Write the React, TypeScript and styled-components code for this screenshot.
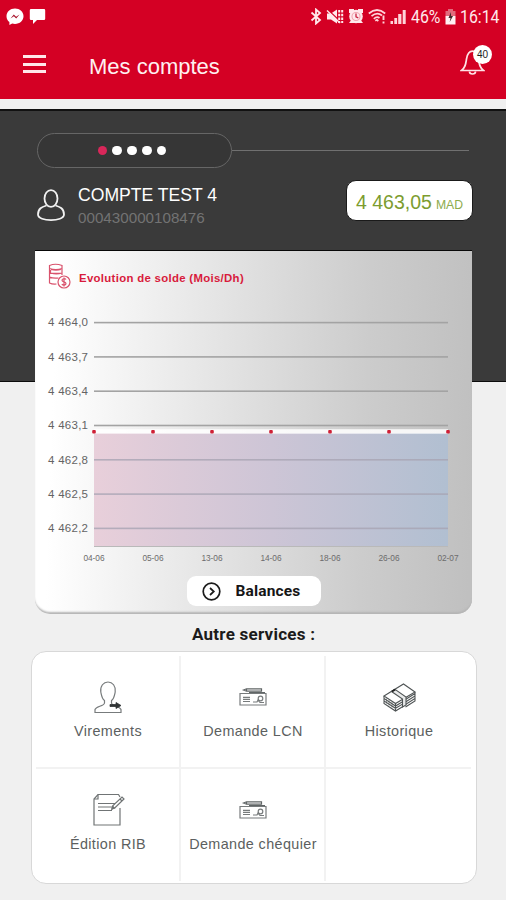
import React from 'react';
import styled, { createGlobalStyle } from 'styled-components';

const sans = '"Liberation Sans", Arial, sans-serif';
const roboto = 'Roboto, "Liberation Sans", sans-serif';

const GlobalStyle = createGlobalStyle`
  * { box-sizing: border-box; }
  body { margin: 0; background: #f0f0f0; font-family: ${sans}; }
  svg { display: block; flex: none; }
`;

const Page = styled.div`
  width: 506px;
  height: 900px;
  overflow: hidden;
  display: flex;
  flex-direction: column;
  background: #f0f0f0;
`;

const Header = styled.header`
  height: 99px;
  flex: none;
  background: #d40024;
  color: #fff;
  display: flex;
  flex-direction: column;
`;

const StatusBar = styled.div`
  height: 33px;
  padding: 0 6px 0 6px;
  display: flex;
  align-items: center;
  justify-content: space-between;
`;

const StatusGroup = styled.div<{ $gap: number }>`
  display: flex;
  align-items: center;
  gap: ${(p) => p.$gap}px;
`;

const StatusText = styled.span<{ $w: number }>`
  width: ${(p) => p.$w}px;
  font: 400 18px/20px ${roboto};
  color: #ffe9ec;
  white-space: nowrap;
  transform: scaleX(0.88);
  transform-origin: left center;
`;

const AppBar = styled.div`
  height: 66px;
  padding: 0 13px 0 23px;
  display: flex;
  align-items: flex-start;
`;

const MenuButton = styled.button`
  width: 23px;
  height: 18px;
  margin: 22px 43px 0 0;
  padding: 0;
  border: 0;
  background: none;
  display: flex;
  flex-direction: column;
  justify-content: space-between;
`;

const MenuLine = styled.span`
  height: 3px;
  width: 23px;
  background: #ffe6e9;
`;

const Title = styled.h1`
  margin: 21px 0 0;
  flex: 1;
  font: 400 22px/26px ${sans};
  color: #fff0f1;
`;

const BellButton = styled.div`
  position: relative;
  width: 33px;
  height: 34px;
  margin-top: 10px;
`;

const Badge = styled.span`
  position: absolute;
  right: 1px;
  top: 2px;
  width: 19px;
  height: 19px;
  border-radius: 50%;
  background: #fff;
  color: #222;
  font: 400 10px/19px ${sans};
  text-align: center;
`;

const Main = styled.main`
  flex: 1;
  margin-top: 10px;
  border-top: 2px solid #111;
  background: linear-gradient(#3a3a3a 0 270px, #0c0c0c 270px 271px, #f0f0f0 271px);
  display: flex;
  flex-direction: column;
`;

const PagerRow = styled.div`
  margin: 22px 37px 1px 37px;
  display: flex;
  align-items: center;
`;

const Pager = styled.div`
  width: 195px;
  height: 35px;
  border: 1px solid #666;
  border-radius: 18px;
  background: #363636;
  display: flex;
  align-items: center;
  justify-content: center;
  gap: 5px;
  padding-right: 5px;
`;

const Dot = styled.span<{ $active?: boolean }>`
  width: 9.8px;
  height: 9.8px;
  border-radius: 50%;
  background: ${(p) => (p.$active ? '#d9275a' : '#fff')};
`;

const PagerLine = styled.div`
  flex: 1;
  height: 1px;
  background: #707070;
`;

const Account = styled.section`
  height: 82px;
  padding: 10px 33px 0 37px;
  display: flex;
  align-items: flex-start;
`;

const Avatar = styled.div`
  margin-top: 10px;
`;

const AccountText = styled.div`
  flex: 1;
  padding: 6px 0 0 13px;
`;

const AccountName = styled.div`
  font: 400 17.6px/20px ${sans};
  color: #fff;
`;

const AccountNumber = styled.div`
  margin-top: 4px;
  font: 400 15.2px/17px ${sans};
  color: #737373;
`;

const Balance = styled.div`
  width: 127px;
  height: 41px;
  margin-top: 1px;
  border: 1px solid #1a1a1a;
  border-radius: 10px;
  background: #fff;
  color: #7c9c2f;
  display: flex;
  align-items: baseline;
  justify-content: center;
  gap: 4px;
  font: 400 19.5px/43px ${sans};
`;

const Currency = styled.span`
  font-size: 12.2px;
  color: #8dab4c;
`;

const Card = styled.section`
  width: 437px;
  height: 363px;
  margin-left: 35px;
  flex: none;
  border-radius: 0 0 15px 15px;
  background: linear-gradient(92deg, #fff 5%, #f1f1f1 24%, #dedede 50%, #cccccc 75%, #c0c0c0 99%);
  box-shadow: 0 -1px 0 #080808, inset 0 -3px 2px -1px #b5b5b5;
  display: flex;
  flex-direction: column;
`;

const CardHead = styled.div`
  height: 54px;
  padding: 12px 0 0 13px;
  display: flex;
  align-items: flex-start;
  gap: 8px;
`;

const CardTitle = styled.h2`
  margin: 8px 0 0;
  font: 700 11.4px/14px ${sans};
  letter-spacing: 0.31px;
  color: #d81b3c;
`;

const BalancesButton = styled.button`
  width: 134px;
  height: 30px;
  margin: 6px 0 0 151.500px;
  padding: 0 0 0 15px;
  border: 0;
  border-radius: 9px;
  background: #fff;
  display: flex;
  align-items: center;
  gap: 15px;
  font: 700 15.5px/30px ${roboto};
  letter-spacing: 0.15px;
  color: #161616;
`;

const SectionTitle = styled.h2`
  margin: 10px 0 0;
  padding-left: 192px;
  font: 700 17px/20px ${roboto};
  letter-spacing: 0.25px;
  color: #1b1b1b;
`;

const ServiceGrid = styled.section`
  width: 446px;
  height: 233px;
  margin: 7px 0 0 31px;
  padding: 4px 3px 3px 4px;
  border: 1.5px solid #d8d8d8;
  border-radius: 15px;
  background: #fff;
  display: grid;
  grid-template-columns: 145px 145px 145px;
  grid-template-rows: 113px 112px;
`;

const Service = styled.div<{ $right?: boolean; $bottom?: boolean }>`
  border-right: ${(p) => (p.$right ? '2px solid #f2f2f2' : '0')};
  border-bottom: ${(p) => (p.$bottom ? '2px solid #f2f2f2' : '0')};
  display: flex;
  flex-direction: column;
  align-items: center;
  padding: 22px 0 0 1px;
`;

const ServiceIcon = styled.div`
  height: 38px;
  display: flex;
  align-items: center;
`;

const ServiceLabel = styled.span`
  margin-top: 7px;
  font: 400 14.4px/17px ${sans};
  letter-spacing: 0.38px;
  color: #5c5f60;
  white-space: nowrap;
`;

const Messenger = () => (
  <svg width="18" height="18" viewBox="0 0 18 18">
    <path d="M9 .6C4.2.6.5 4 .5 8.300c0 2.400 1.100 4.400 2.900 5.800v3l2.800-1.500c.9.300 1.800.4 2.800.4 4.800 0 8.500-3.300 8.500-7.700S13.800.6 9 .6z" fill="#fff" />
    <path d="M4.500 10.500l3.300-4 2.300 2.300 3.400-2.300-3.300 4-2.300-2.300z" fill="#a8142c" />
  </svg>
);

const Chat = () => (
  <svg width="17" height="17" viewBox="0 0 17 17">
    <path d="M2 1h13q1.200 0 1.200 1.200v8.600q0 1.200-1.200 1.200H8l-4 4v-4H2Q.8 12 .8 10.800V2.200Q.8 1 2 1z" fill="#fff" />
  </svg>
);

const Bluetooth = () => (
  <svg width="12" height="17" viewBox="0 0 12 17" fill="none" stroke="#ffe9ec" strokeWidth="1.8">
    <path d="M1.500 4.500l8.500 7.500-4 3.500V1.500l4 3.500-8.500 7.500" />
  </svg>
);

const Muted = () => (
  <svg width="18" height="17" viewBox="0 0 18 17">
    <path d="M1 5.500h4l6-4v14l-6-4H1z" fill="#ffe9ec" />
    <path d="M1.500 1.500l14 13" stroke="#d40024" strokeWidth="1.400" />
    <path d="M1 2.500l13 12.500" stroke="#ffe9ec" strokeWidth="1.400" />
    <path d="M13.200 2v13M16.200 2v13" stroke="#ffe9ec" strokeWidth="2" strokeDasharray="2.500 1.200" />
  </svg>
);

const Alarm = () => (
  <svg width="16" height="17" viewBox="0 0 16 17">
    <path d="M1 1h5v4H1zM10 1h5v4h-5zM1 15l3-4h8l3 4z" fill="#ffe9ec" />
    <circle cx="8" cy="8.500" r="6.800" fill="#ffe9ec" />
    <circle cx="8" cy="8.500" r="4" fill="none" stroke="#f0a5b0" strokeWidth="1.100" />
    <path d="M8 5.500v3.300l2.300 1" fill="none" stroke="#c82440" strokeWidth="1.300" />
  </svg>
);

const Wifi = () => (
  <svg width="18" height="17" viewBox="0 0 18 17" fill="none" stroke="#ffd4da" strokeWidth="1.700">
    <path d="M.8 5.500Q9-1.500 17.200 5.500M3.500 8.200Q9 3.500 14 7.500M5.800 10.800Q9 8 11.500 10M7.300 12.800l1.700-1 1.300 1.300" />
    <path d="M15.500 7.500v4.500M15.500 13.500v2" strokeWidth="1.900" />
  </svg>
);

const Signal = () => (
  <svg width="17" height="16" viewBox="0 0 17 16" fill="#ffd4da">
    <path d="M.5 12h2.500v3H.5zM4.300 9h2.800v6H4.300zM8.200 5h3.200v10H8.200zM12.700 1h3v14h-3z" />
  </svg>
);

const Battery = () => (
  <svg width="11" height="16" viewBox="0 0 11 16">
    <path d="M3 0h5v2h2.500v5h-10V2H3z" fill="#e2697c" />
    <path d="M.5 7h10v8.500H.5z" fill="#fff0f2" />
    <path d="M6 3L3.500 9h2L4.700 13l3.300-6H6z" fill="#43262b" />
  </svg>
);

const Bell = () => (
  <svg width="25" height="32" viewBox="0 0 25 32" fill="none" stroke="#ffe3e7" strokeWidth="1.700">
    <path d="M1.500 27.500c4-3 4.200-6.500 5-11.500 .8-5 2.600-7.800 6-7.800s5.200 2.800 6 7.800c.8 5 1 8.500 5 11.500z" />
    <path d="M9.500 28.500c0 3.300 6 3.300 6 0" />
  </svg>
);

const Person = () => (
  <svg width="28" height="33" viewBox="0 0 28 33" fill="none" stroke="#f2f2f2" strokeWidth="1.800">
    <ellipse cx="14" cy="9.500" rx="6.500" ry="8.400" />
    <path d="M9.500 16.500C5 18 1 19.500 1 25.500c0 7.500 26 7.500 26 0 0-6-4-7.500-8.500-9" />
  </svg>
);

const Coins = () => (
  <svg width="23" height="27" viewBox="0 0 23 27" fill="none" stroke="#d9536d" strokeWidth="1.200">
    <path d="M1.500 2.500q6-2.500 12.500 0v3q-6 2-12.500 0zM2.500 7v3q6 2 11.500 0V7M1.500 11v3q4 1.700 9 1M1.500 16v4q3 1.500 7 1M3 6.500q5 1.300 10 0M2 15h7M2 10.300h11M1.500 5v14M14 5v7" />
    <circle cx="16" cy="19" r="6" />
    <path d="M18 16.500c-1-1.300-4-.9-4 .8s4 1.500 4 3.300-3 2-4.200.5M16 14.500v9" />
  </svg>
);

const ClientIcon = () => (
  <svg width="28" height="33" viewBox="0 0 28 33" fill="none" stroke="#777b7c" strokeWidth="1.200">
    <path d="M1 31.500v-3c1-3.500 9-3 9.500-6.500v-2.500C8 18 7.500 14.500 6.800 11 6 5 9.500 1 14 1s8 4 7.200 10c-.7 3.500-1.200 7-3.700 8.500V22c.5 3.500 8.500 3 9.500 6.500v3z" />
    <path d="M16 23.500h6v-2l5 3-5 3v-2h-6z" fill="#303435" stroke="#303435" strokeWidth=".8" />
  </svg>
);

const ChequeIcon = () => (
  <svg width="28" height="18" viewBox="0 0 28 18" fill="none" stroke="#777b7c" strokeWidth="1.200">
    <path d="M1 5.500h26v11.500H1zM4 9.300h7M4 11.300h7M4 13.500h7M14 14h4l1-2 2 2.500h4" />
    <circle cx="21.500" cy="10.500" r="2.300" />
    <path d="M4.500 2l3-1.200h15v2.400h-15zM7.500.8v2.400M10 4.500h16" stroke="#606566" />
  </svg>
);

const CashIcon = () => (
  <svg width="33" height="29" viewBox="0 0 33 29" fill="none" stroke="#505556" strokeWidth="1.100">
    <path d="M1 13L20.500 1 32 9 12.500 20.500z" fill="#fff" />
    <path d="M1 13v2.500l11.500 7.500 7-4.200M1 16v2l11.500 7.300 7-4.200M1 18.500v2l11.500 7.500 7-4.200M12.500 20.500V28M22.500 19l9.500-6V9M22.500 21.500l9.500-6v-3M22.500 16.500l9.500-6M22.500 24l9.500-6v-3" />
    <path d="M8.500 8.500L19.500 16v8l3.500-2v-8L12 6.300z" fill="#e9eaea" />
    <path d="M9 8.500L12.200 6.500" stroke="#222" strokeWidth="2" />
    <path d="M3.500 15.500v5M6 17v5.500M9 19v5.500" strokeWidth=".5" />
  </svg>
);

const NoteIcon = () => (
  <svg width="33" height="34" viewBox="0 0 33 34" fill="none" stroke="#707475" strokeWidth="1.200">
    <path d="M28 15v17H2V6l4-4.500h20.500L28 4" />
    <path d="M2 6h4V1.500M6 10.500h17M6 14h15M6 17.500h14" />
    <path d="M20 16l1-3.500L30 4l2 2-9 8.800zM28 6l2 2" fill="#fff" />
    <path d="M20 16l.7-2.600 1.700 1.700z" fill="#333" />
  </svg>
);

const yTicks = ['4 464,0', '4 463,7', '4 463,4', '4 463,1', '4 462,8', '4 462,5', '4 462,2'];
const xTicks = ['04-06', '05-06', '13-06', '14-06', '18-06', '26-06', '02-07'];

const AxisLabel = styled.text`
  font-family: ${sans};
  font-size: 11.5px;
  fill: #646464;
`;

const DateLabel = styled.text`
  font-family: ${sans};
  font-size: 8.3px;
  fill: #6c6c6c;
  text-anchor: middle;
`;

const BalanceChart = () => (
  <svg width="437" height="265" viewBox="0 0 437 265">
    <defs>
      <linearGradient id="area" x1="0" x2="1" y1="0" y2="0">
        <stop offset="0" stopColor="#e8cfda" />
        <stop offset="0.5" stopColor="#cdc5d6" />
        <stop offset="1" stopColor="#b1bfd1" />
      </linearGradient>
    </defs>
    <rect x="59" y="128" width="354" height="113.500" fill="url(#area)" />
    <rect x="59" y="124.200" width="354" height="4.500" fill="#fff" opacity=".85" />
    {yTicks.map((label, i) => (
      <g key={label}>
        <rect x="59" y={16.8 + i * 34.3} width="354" height="1.600" fill={i > 3 ? '#a8a4b3' : '#a3a3a3'} opacity={i > 3 ? 0.8 : 1} />
        <AxisLabel x="13" y={21.300 + i * 34.3} textLength="40">{label}</AxisLabel>
      </g>
    ))}
    <rect x="59" y="241" width="354" height="1" fill="#b9b9b9" />
    {xTicks.map((label, i) => (
      <g key={label}>
        <rect x={57.200 + i * 59} y="125" width="3.600" height="3.600" rx="1" fill="#cf2036" />
        <DateLabel x={59 + i * 59} y="256">{label}</DateLabel>
      </g>
    ))}
  </svg>
);

const ArrowCircle = () => (
  <svg width="19" height="19" viewBox="0 0 19 19" fill="none" stroke="#1c1c1c" strokeWidth="1.700">
    <circle cx="9.500" cy="9.500" r="8.300" />
    <path d="M8 6l3.800 3.500L8 13" />
  </svg>
);

const services = [
  { label: 'Virements', icon: <ClientIcon /> },
  { label: 'Demande LCN', icon: <ChequeIcon /> },
  { label: 'Historique', icon: <CashIcon /> },
  { label: 'Édition RIB', icon: <NoteIcon /> },
  { label: 'Demande chéquier', icon: <ChequeIcon /> },
];

export default function App() {
  return (
    <Page>
      <GlobalStyle />
      <Header>
        <StatusBar>
          <StatusGroup $gap={5}>
            <Messenger />
            <Chat />
          </StatusGroup>
          <StatusGroup $gap={4}>
            <Bluetooth />
            <Muted />
            <Alarm />
            <Wifi />
            <Signal />
            <StatusText $w={30}>46%</StatusText>
            <Battery />
            <StatusText $w={40}>16:14</StatusText>
          </StatusGroup>
        </StatusBar>
        <AppBar>
          <MenuButton aria-label="Menu">
            <MenuLine />
            <MenuLine />
            <MenuLine />
          </MenuButton>
          <Title>Mes comptes</Title>
          <BellButton>
            <Bell />
            <Badge>40</Badge>
          </BellButton>
        </AppBar>
      </Header>
      <Main>
        <PagerRow>
          <Pager>
            <Dot $active />
            <Dot />
            <Dot />
            <Dot />
            <Dot />
          </Pager>
          <PagerLine />
        </PagerRow>
        <Account>
          <Avatar>
            <Person />
          </Avatar>
          <AccountText>
            <AccountName>COMPTE TEST 4</AccountName>
            <AccountNumber>000430000108476</AccountNumber>
          </AccountText>
          <Balance>
            4 463,05
            <Currency>MAD</Currency>
          </Balance>
        </Account>
        <Card>
          <CardHead>
            <Coins />
            <CardTitle>Evolution de solde (Mois/Dh)</CardTitle>
          </CardHead>
          <BalanceChart />
          <BalancesButton>
            <ArrowCircle />
            Balances
          </BalancesButton>
        </Card>
        <SectionTitle>Autre services :</SectionTitle>
        <ServiceGrid>
          {services.map((s, i) => (
            <Service key={s.label} $right={i % 3 < 2} $bottom={i < 3}>
              <ServiceIcon>{s.icon}</ServiceIcon>
              <ServiceLabel>{s.label}</ServiceLabel>
            </Service>
          ))}
          <Service />
        </ServiceGrid>
      </Main>
    </Page>
  );
}
